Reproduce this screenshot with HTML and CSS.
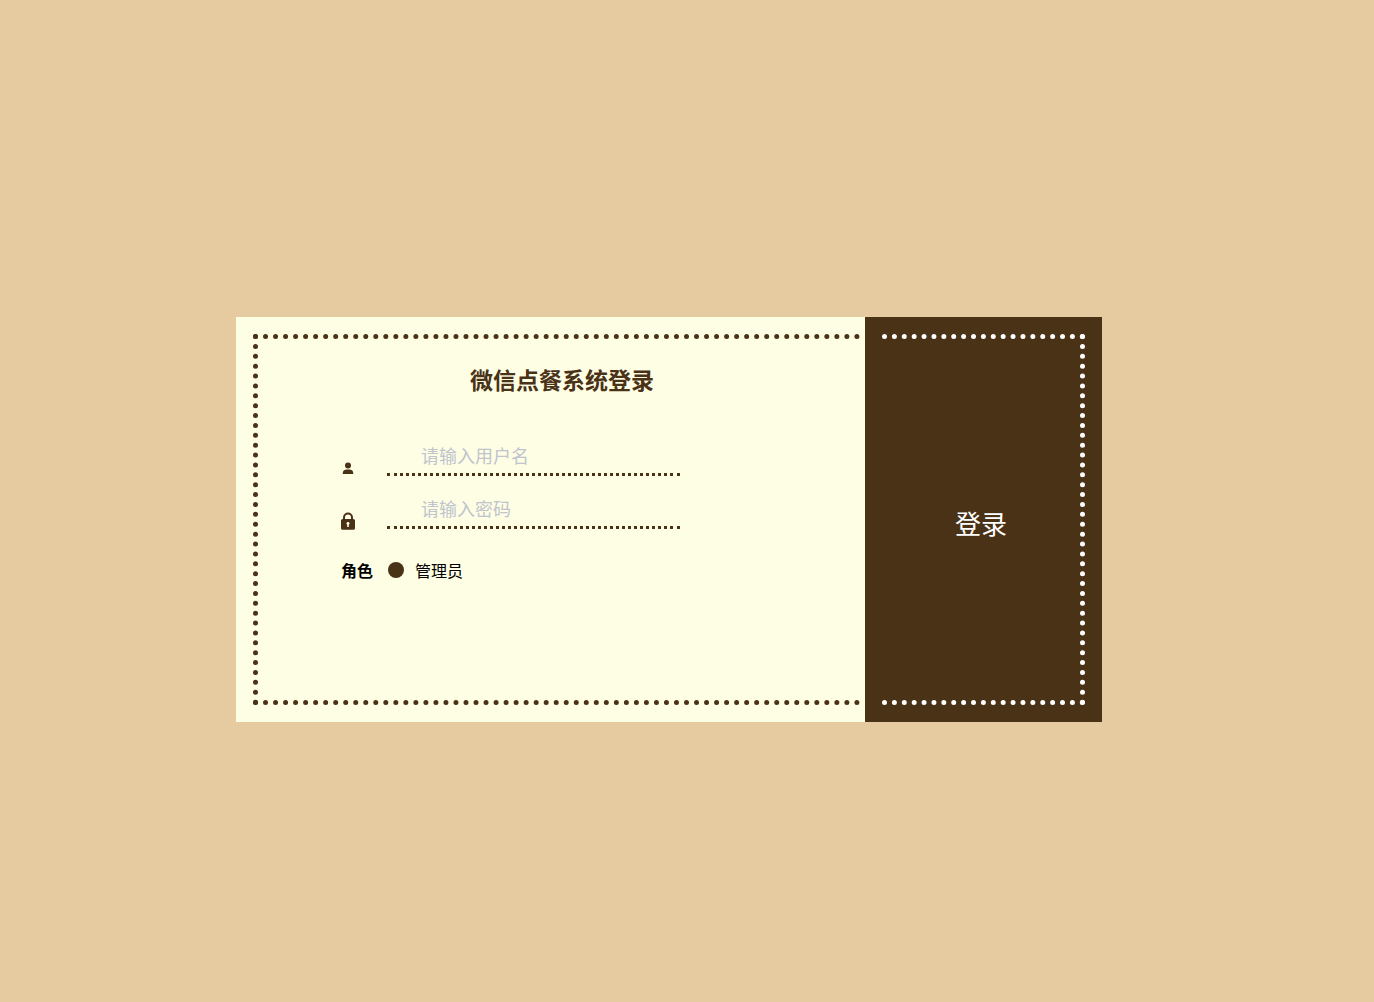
FILE: index.html
```
<!DOCTYPE html>
<html lang="zh-CN">

<head>
    <meta charset="UTF-8">
    <meta name="viewport" content="width=device-width, initial-scale=1.0">
    <title>微信点餐系统登录</title>
    <link rel="stylesheet" href="styles.css">
</head>

<body>
    <form class="ticket">
        <div class="main">
            <div class="main-frame">
                <h1 class="title">微信点餐系统登录</h1>
                <div class="field">
                    <label for="username" aria-label="用户名">
                        <svg class="icon" viewBox="0 0 14 18">
                            <circle cx="7" cy="6.4" r="3" />
                            <path d="M1.800 15v-1.200C1.800 11.600 4 10.600 5.400 10.600h3.200c1.400 0 3.600 1 3.600 3.200V15z" />
                        </svg>
                    </label>
                    <input class="text-input" type="text" id="username" placeholder="请输入用户名">
                </div>
                <div class="field">
                    <label for="password" aria-label="密码">
                        <svg class="icon" viewBox="0 0 14 18">
                            <path class="shackle" d="M3 8V5.600a4 4 0 0 1 8 0V8" />
                            <path fill-rule="evenodd" d="M1.600 7h10.800A1.600 1.600 0 0 1 14 8.600v7.600a1.600 1.600 0 0 1-1.600 1.600H1.600A1.600 1.600 0 0 1 0 16.200V8.600A1.600 1.600 0 0 1 1.600 7zM7 10a1.500 1.500 0 0 0-.8 2.800V15h1.600v-2.200A1.500 1.500 0 0 0 7 10z" />
                        </svg>
                    </label>
                    <input class="text-input" type="password" id="password" placeholder="请输入密码">
                </div>
                <div class="role" role="radiogroup" aria-labelledby="role-label">
                    <strong id="role-label">角色</strong>
                    <label class="role-option">
                        <input class="radio" type="radio" name="role" value="admin" checked>
                        管理员
                    </label>
                </div>
            </div>
        </div>
        <div class="stub">
            <button class="login" type="submit">登录</button>
        </div>
    </form>
</body>

</html>
```

FILE: styles.css
```
* {
    box-sizing: border-box;
}

body {
    margin: 0;
    min-height: 100vh;
    padding: 37px 36px 0 0;
    display: flex;
    justify-content: center;
    align-items: center;
    background-color: #e6cba0;
    font-family: "Noto Sans CJK SC", sans-serif;
    font-size: 16px;
}

.ticket {
    display: flex;
    width: 100%;
    max-width: 866px;
    min-height: 405px;
}

.main {
    flex: 1;
    display: flex;
    padding: 17px 5px 17px 17px;
    background-color: #fefee5;
}

.main-frame {
    flex: 1;
    padding: 24px 77px 24px 83px;
    border: 5px dotted #4a3217;
    border-right: none;
}

.title {
    margin: 0 0 45px;
    color: #4a3217;
    font-size: 23px;
    line-height: 32px;
    text-align: center;
}

.field {
    display: flex;
    align-items: flex-end;
    gap: 32px;
    margin-bottom: 16px;
}

.icon {
    display: block;
    width: 14px;
    height: 18px;
    fill: #4a3217;
}

.shackle {
    fill: none;
    stroke: #4a3217;
    stroke-width: 2;
}

.text-input {
    width: 293px;
    height: 36px;
    margin: 0 0 1px;
    padding: 0 34px 3px;
    border: none;
    border-bottom: 3px dotted #4a3217;
    outline: none;
    background: none;
    color: #4a3217;
    font-family: inherit;
    font-size: 18px;
}

.text-input::placeholder {
    color: #c0c4cc;
}

.role {
    display: flex;
    align-items: center;
    gap: 15px;
    margin-top: 28px;
    line-height: 24px;
}

.role-option {
    display: flex;
    align-items: center;
    gap: 11px;
}

.radio {
    appearance: none;
    width: 16px;
    height: 16px;
    margin: 0;
    border-radius: 50%;
    background-color: #4a3217;
}

.stub {
    flex: 0 0 237px;
    display: flex;
    padding: 17px;
    background-color: #4a3217;
}

.login {
    flex: 1;
    padding: 6px 0 0;
    border: 5px dotted #fff;
    border-left: none;
    background: none;
    color: #fff;
    font-family: inherit;
    font-size: 26px;
    cursor: pointer;
}
```
